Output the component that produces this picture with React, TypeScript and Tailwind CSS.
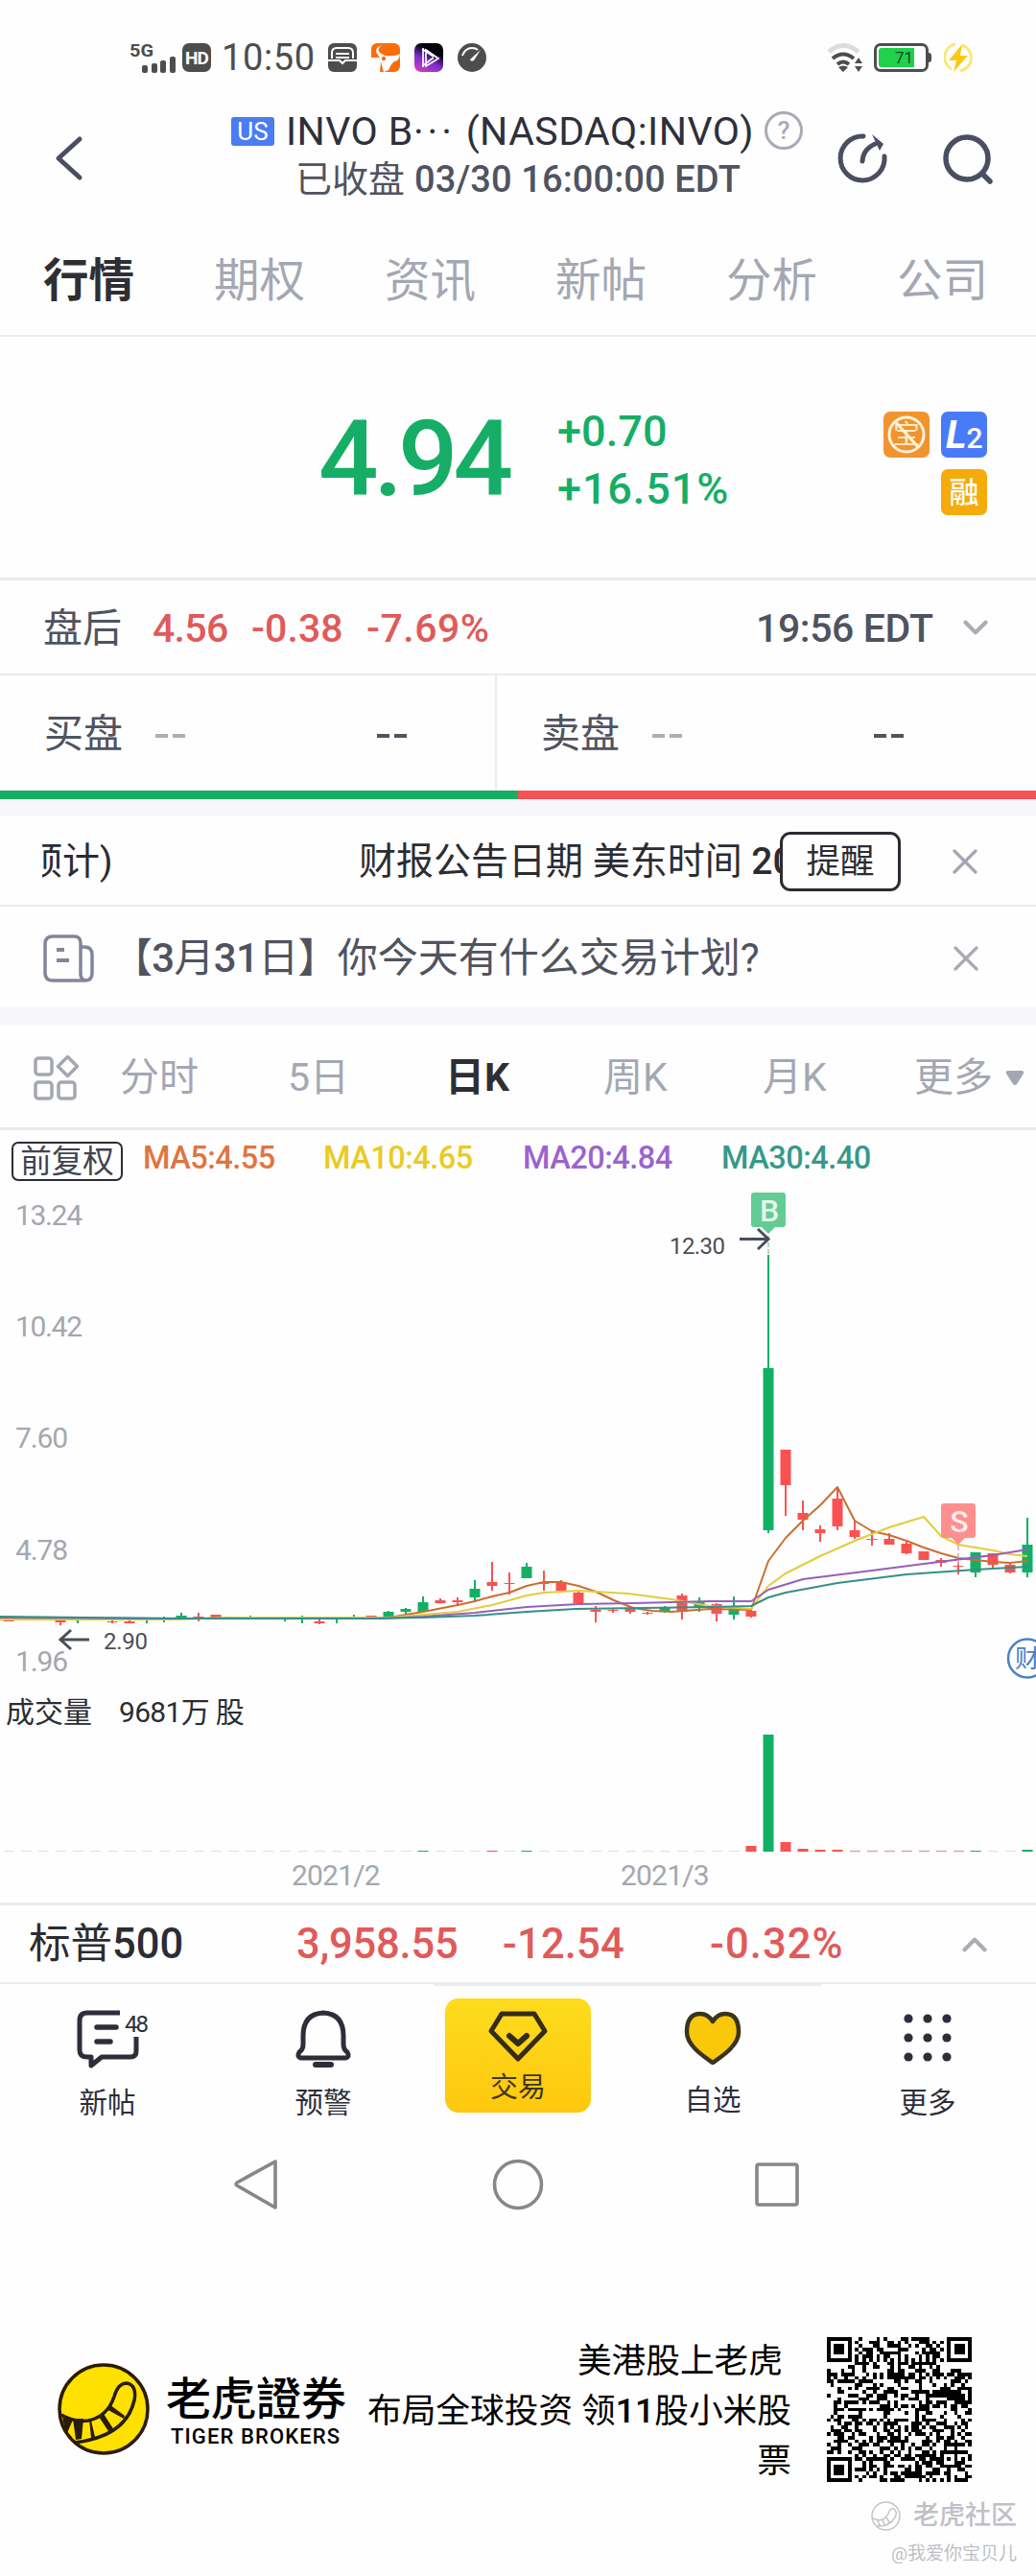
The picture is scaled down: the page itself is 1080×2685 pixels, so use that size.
import type { ReactNode } from "react";
import { ChevronDown, ChevronUp, X } from "lucide-react";

const GREEN = "#12b065";
const RED = "#fa5252";

// [center x, up, high, body top, body bottom, low]
type Candle = [number, boolean, number, number, number, number];

const candles: Candle[] = [
    [9, false, 1687, 1688, 1690, 1690],
    [63, false, 1688, 1689, 1691, 1694],
    [81, true, 1688, 1688, 1689, 1692],
    [117, false, 1689, 1690, 1691, 1692],
    [135, false, 1689, 1690, 1692, 1692],
    [153, true, 1687, 1688, 1689, 1692],
    [171, true, 1685, 1687, 1688, 1691],
    [189, true, 1681, 1684, 1686, 1688],
    [207, false, 1681, 1685, 1686, 1690],
    [225, false, 1683, 1683, 1686, 1686],
    [261, true, 1684, 1686, 1687, 1688],
    [297, true, 1685, 1687, 1688, 1690],
    [315, true, 1684, 1687, 1688, 1692],
    [333, false, 1688, 1690, 1692, 1693],
    [351, true, 1685, 1687, 1688, 1692],
    [369, true, 1683, 1685, 1687, 1687],
    [387, false, 1684, 1684, 1686, 1686],
    [405, true, 1679, 1680, 1685, 1685],
    [423, true, 1676, 1677, 1680, 1682],
    [441, true, 1664, 1670, 1680, 1680],
    [459, false, 1666, 1668, 1671, 1671],
    [477, false, 1665, 1668, 1670, 1674],
    [495, true, 1647, 1656, 1665, 1670],
    [513, false, 1628, 1649, 1653, 1658],
    [531, false, 1639, 1650, 1651, 1662],
    [549, true, 1629, 1633, 1645, 1645],
    [567, false, 1637, 1649, 1651, 1658],
    [585, false, 1647, 1649, 1658, 1658],
    [603, false, 1659, 1660, 1671, 1671],
    [621, false, 1674, 1678, 1680, 1691],
    [639, false, 1676, 1678, 1679, 1681],
    [657, false, 1675, 1676, 1680, 1682],
    [675, false, 1680, 1681, 1682, 1683],
    [693, true, 1674, 1676, 1680, 1681],
    [711, false, 1661, 1663, 1680, 1688],
    [729, true, 1665, 1670, 1676, 1680],
    [747, false, 1671, 1672, 1682, 1690],
    [765, true, 1664, 1676, 1683, 1688],
    [783, false, 1678, 1679, 1685, 1686],
    [801, true, 1308, 1426, 1595, 1598],
    [819, false, 1511, 1511, 1548, 1580],
    [837, false, 1564, 1577, 1584, 1595],
    [855, false, 1590, 1594, 1598, 1607],
    [873, false, 1551, 1562, 1591, 1595],
    [891, false, 1585, 1595, 1602, 1604],
    [909, false, 1596, 1604, 1605, 1611],
    [927, false, 1598, 1604, 1610, 1610],
    [945, false, 1607, 1609, 1619, 1620],
    [963, false, 1617, 1617, 1626, 1626],
    [981, false, 1624, 1626, 1629, 1633],
    [999, false, 1628, 1632, 1633, 1641],
    [1017, true, 1618, 1618, 1639, 1644],
    [1035, false, 1619, 1619, 1631, 1634],
    [1053, false, 1630, 1631, 1639, 1640],
    [1071, true, 1582, 1610, 1639, 1644],
];

const averages = [
    {
        color: "#cc6d33",
        points: "0,1687 160,1688 250,1686 380,1687 405,1686 441,1680 477,1673 495,1669 513,1664 531,1660 549,1653 567,1649 585,1649 603,1653 621,1659 640,1668 660,1676 680,1679 700,1680 740,1677 783,1678 801,1627 819,1603 837,1585 855,1569 873,1550 891,1585 909,1596 927,1600 945,1606 963,1613 981,1619 999,1624 1017,1626 1035,1628 1053,1629 1071,1627",
    },
    {
        color: "#e3cd3a",
        points: "0,1688 170,1688 250,1686 405,1686 441,1683 477,1680 513,1673 549,1663 567,1660 585,1659 603,1658 655,1661 700,1667 740,1674 783,1677 801,1653 819,1640 855,1622 891,1606 927,1592 963,1581 981,1601 999,1610 1035,1616 1053,1620 1071,1622",
    },
    {
        color: "#9560bd",
        points: "0,1686 160,1687 400,1687 441,1685 495,1681 549,1675 603,1672 660,1671 740,1669 783,1669 801,1657 837,1646 909,1637 963,1630 1035,1621 1053,1618 1071,1615",
    },
    {
        color: "#368f88",
        points: "0,1685 90,1686 200,1687 380,1687 441,1686 495,1684 549,1680 600,1677 740,1675 783,1674 801,1665 819,1660 873,1650 945,1641 1017,1636 1071,1633",
    },
];

const volumes = [
    { x: 783, h: 6, up: false },
    { x: 801, h: 122, up: true },
    { x: 819, h: 10, up: false },
    { x: 837, h: 3, up: false },
    { x: 855, h: 2, up: false },
    { x: 873, h: 2, up: false },
    { x: 1017, h: 1, up: true },
    { x: 1071, h: 2, up: true },
    { x: 513, h: 1, up: false },
    { x: 549, h: 1, up: true },
    { x: 441, h: 1, up: true },
];

const axisLabels = [
    { y: 1277, text: "13.24" },
    { y: 1393, text: "10.42" },
    { y: 1509, text: "7.60" },
    { y: 1626, text: "4.78" },
    { y: 1742, text: "1.96" },
];

function StatusBar() {
    return (
        <div className="flex h-[110px] items-center pt-[10px] pl-[135px] text-[#4d4d4d]">
            <svg width="50" height="34" viewBox="0 0 50 34" fill="currentColor">
                <text x="0" y="16" fontSize="19" fontWeight="700" textLength="25" lengthAdjust="spacingAndGlyphs">5G</text>
                <rect x="13" y="25" width="6" height="8" rx="2" />
                <rect x="23" y="23" width="6" height="10" rx="2" />
                <rect x="32" y="20" width="6" height="13" rx="2" />
                <rect x="42" y="16" width="6" height="17" rx="2" />
            </svg>
            <div className="ml-[5px] flex size-[30px] items-center justify-center rounded-[7px] bg-[#4d4d4d] text-[19px] leading-none font-bold tracking-[-1px] text-white">HD</div>
            <span className="ml-[11px] w-[111px] text-[38px] leading-none tracking-[0.6px]">10:50</span>
            <svg width="30" height="30" viewBox="0 0 30 30">
                <rect width="30" height="30" rx="6" fill="#4d4d4d" />
                <path d="M4 16V10q0-5 5-5h12q5 0 5 5v6" fill="none" stroke="#fff" strokeWidth="2" />
                <path d="M8 11h14M8 15h14" stroke="#fff" strokeWidth="2" />
                <path d="M0 18h12l3 3 3-3h12" fill="none" stroke="#fff" strokeWidth="2" />
            </svg>
            <svg width="30" height="30" viewBox="0 0 30 30" className="ml-[15px]">
                <rect width="30" height="30" rx="6" fill="#fb6d0c" />
                <path d="M0 15h8l2 4-1 11H6q-6 0-6-6zM12 2Q5 5 9 10l5 3q9 1 14-1l2-1q-1 8-6 8l-3 3-3 6-5 2-2-7-2-7-2-4Q3 8 7 4z" fill="#fff" />
                <circle cx="13" cy="16" r="2.200" fill="#fb6d0c" />
            </svg>
            <svg width="30" height="30" viewBox="0 0 30 30" className="ml-[15px]">
                <defs>
                    <linearGradient id="player" x1="0.7" y1="0" x2="0.2" y2="1">
                        <stop offset="0.25" stopColor="#06030c" />
                        <stop offset="0.6" stopColor="#7c2fd0" />
                        <stop offset="1" stopColor="#d238c0" />
                    </linearGradient>
                </defs>
                <rect width="30" height="30" rx="7" fill="url(#player)" />
                <path d="M9 5v20M12 7l13 9-13 8zM8 6l12 8M8 24l12-9" fill="none" stroke="#fff" strokeWidth="1.7" />
            </svg>
            <svg width="30" height="30" viewBox="0 0 30 30" className="ml-[15px]">
                <circle cx="15" cy="15" r="15" fill="#4d4d4d" />
                <path d="M5 13Q8 5 15 5q4 0 6 2" fill="none" stroke="#fff" strokeWidth="2" />
                <path d="M24 7 17 18q-3 2-4-1z" fill="#fff" />
            </svg>
            <svg width="38" height="32" viewBox="0 0 38 32" className="ml-[355px]" fill="none" strokeWidth="5">
                <path d="M2 10Q17-3 33 10" stroke="#dcdcdc" />
                <path d="M6 17q11-9 22 0M11 23q6-5 12 0" stroke="#4d4d4d" strokeWidth="4" />
                <path d="m12 26 5 5 5-5q-5-3-10 0zM29 22l4-6 4 6zM29 25h8l-4 6z" fill="#4d4d4d" />
            </svg>
            <div className="ml-[11px] flex h-[30px] w-[57px] rounded-[7px] border-[3px] border-[#4d4d4d] p-[2px]">
                <div className="flex w-[37px] items-center justify-end rounded-l-[3px] bg-[#1ed24b] pr-px text-[17px] leading-none text-[#24422b]">71</div>
            </div>
            <div className="h-[10px] w-[3px] rounded-r bg-[#4d4d4d]" />
            <svg width="30" height="32" viewBox="0 0 30 32" className="ml-[13px]">
                <path d="M12 2A14 14 0 0 0 8 28M19 3a14 14 0 0 1-2 27" fill="none" stroke="#fbe77a" strokeWidth="3" />
                <path d="M19 2 5 19h8l-3 12 15-17h-8z" fill="#fbc914" />
            </svg>
        </div>
    );
}

function Header() {
    return (
        <div className="flex h-[126px] items-start">
            <svg width="32" height="50" viewBox="0 0 32 50" className="mt-[30px] ml-[56px]" fill="none" stroke="#4b4e60" strokeWidth="5" strokeLinecap="round" strokeLinejoin="round">
                <path d="M27 5 5 25l22 20" />
            </svg>
            <div className="ml-[153px] w-[600px]">
                <div className="flex h-[54px] items-center">
                    <span className="flex h-[30px] w-[45px] items-center justify-center rounded-[3px] bg-[#4a7cf3] text-[26px] leading-none text-white">US</span>
                    <span className="ml-[12px] w-[482px] text-[41px] leading-none tracking-[0.45px] whitespace-nowrap text-[#2e303c]">
                        INVO B<span className="tracking-[4px]">···</span> (NASDAQ:INVO)
                    </span>
                    <span className="mb-[3px] ml-[17px] flex size-[40px] shrink-0 items-center justify-center rounded-full border-[3px] border-[#a9abb5] text-[26px] leading-none font-medium text-[#a9abb5]">?</span>
                </div>
                <div className="ml-[67px] flex h-[46px] items-center text-[38px] leading-none font-medium whitespace-nowrap text-[#505361]">
                    <span className="w-[124px] font-normal">已收盘</span>
                    <span className="tracking-[0.1px]">03/30 16:00:00 EDT</span>
                </div>
            </div>
            <svg width="54" height="54" viewBox="0 0 54 54" className="mt-[28px] ml-[32px]" fill="none" stroke="#4b4e60" strokeWidth="5" strokeLinecap="round">
                <path d="M27 4A23 23 0 1 0 49 25" />
                <path d="M26 30q1-14 16-19" />
                <path d="M36 2l12 10-4 7z" fill="#4b4e60" stroke="none" />
            </svg>
            <svg width="56" height="56" viewBox="0 0 56 56" className="mt-[28px] ml-[55px]" fill="none" stroke="#4b4e60" strokeWidth="5.500" strokeLinecap="round">
                <circle cx="26" cy="27" r="22" />
                <path d="m42 43 8 8" />
            </svg>
        </div>
    );
}

function MainTabs() {
    return (
        <div className="flex h-[115px] items-center justify-between border-b-2 border-[#ececee] pt-[2px] pr-[50px] pl-[45px] text-[47.500px] leading-none text-[#a4a7b3]">
            <span className="font-bold text-[#2f2f33]">行情</span>
            <span>期权</span>
            <span>资讯</span>
            <span>新帖</span>
            <span>分析</span>
            <span>公司</span>
        </div>
    );
}

function PriceBlock() {
    return (
        <div className="flex h-[254px] border-b-[3px] border-[#ebebed] text-[#16ae66]">
            <div className="mt-[73px] ml-[332px] w-[249px] text-[110px] leading-none font-medium tracking-[-5px]">4.94</div>
            <div className="mt-[69px] w-[327px] text-[45px] leading-[60px] font-medium">
                <div className="tracking-[0.1px]">+0.70</div>
                <div className="tracking-[0.9px]">+16.51%</div>
            </div>
            <div className="mt-[78px] ml-[13px] flex w-[108px] flex-wrap content-start justify-end gap-[12px] text-white">
                <svg width="48" height="48" viewBox="0 0 48 48">
                    <rect width="48" height="48" rx="7" fill="#f19430" />
                    <text x="10" y="34" fontSize="28" fill="#ffe9c4">宝</text>
                    <circle cx="24" cy="24" r="18" fill="none" stroke="#fff3da" strokeWidth="3" />
                    <path d="m12 10 24 27" stroke="#fff3da" strokeWidth="3" />
                </svg>
                <div className="flex size-[48px] items-baseline rounded-[7px] bg-[#4a7bf7] pt-[4px] pl-[5px] leading-none font-bold">
                    <span className="text-[41px] leading-none italic">L</span>
                    <span className="text-[30px] leading-none font-medium">2</span>
                </div>
                <div className="flex size-[48px] items-center justify-center rounded-[7px] bg-[#f5ab0a] text-[31px] leading-none font-medium">融</div>
            </div>
        </div>
    );
}

function AfterHours() {
    return (
        <div className="flex h-[99px] items-center border-b-2 border-[#ebebed] pt-[3px] pl-[45px] text-[41px] leading-none font-medium whitespace-nowrap text-[#e05a5a]">
            <span className="w-[114px] font-normal text-[#50535f]">盘后</span>
            <span className="w-[103px] tracking-[-0.7px]">4.56</span>
            <span className="w-[120px] tracking-[0.1px]">-0.38</span>
            <span className="w-[406px] tracking-[0.5px]">-7.69%</span>
            <span className="w-[208px] tracking-[-0.4px] text-[#50535f]">19:56 EDT</span>
            <ChevronDown size={42} strokeWidth={2.4} color="#abadb6" className="-mt-[3px]" />
        </div>
    );
}

function Quote({ label }: { label: string }) {
    return (
        <div className="flex flex-1 items-center pt-[3px] pl-[46px] text-[41px] leading-none text-[#50535f]">
            <span className="w-[116px]">{label}</span>
            <span className="flex w-[231px] gap-[5px] pt-[2px]">
                <i className="h-[4px] w-[13px] bg-[#adafb6]" />
                <i className="h-[4px] w-[13px] bg-[#adafb6]" />
            </span>
            <span className="flex gap-[5px] pt-[2px]">
                <i className="h-[4px] w-[13px] bg-[#50535f]" />
                <i className="h-[4px] w-[13px] bg-[#50535f]" />
            </span>
        </div>
    );
}

function Notices() {
    return (
        <>
            <div className="flex h-[94px] items-center border-b-2 border-[#ebebed] pt-px pl-[44px] text-[39px] leading-none text-[#2b2c33]">
                <div className="flex w-[769px] overflow-hidden pt-[2px] whitespace-nowrap">
                    <span className="-ml-[18px] w-[348px] shrink-0 py-1">预计)</span>
                    <span className="shrink-0 py-1">财报公告日期 美东时间 <b className="font-medium">20</b></span>
                </div>
                <div className="flex h-[62px] w-[126px] shrink-0 items-center justify-center rounded-[11px] border-[3px] border-[#2b2c33] pt-[2px] text-[35.500px]">提醒</div>
                <X size={44} strokeWidth={1.8} color="#a4a7b3" className="ml-[45px]" />
            </div>
            <div className="flex h-[105px] items-center pt-[2px] pl-[45px]">
                <svg width="54" height="50" viewBox="0 0 54 50" fill="none" stroke="#83869a" strokeWidth="3.500">
                    <path d="M10 2h22q7 0 7 7v32q0 7 7 7H10q-8 0-8-8V10q0-8 8-8zM39 13h4q8 0 8 8v19q0 8-7 8" />
                    <path d="M14 16h8M14 27h13" strokeWidth="4" />
                </svg>
                <span className="ml-[18px] w-[868px] text-[42px] leading-none whitespace-nowrap text-[#50535f]">
                    <span className="tracking-[-0.7px]">【<b className="font-medium">3</b>月<b className="font-medium">31</b>日】</span>你今天有什么交易计划?
                </span>
                <X size={44} strokeWidth={1.8} color="#a9abb3" />
            </div>
        </>
    );
}

function ChartTabs() {
    return (
        <div className="flex h-[110px] items-center border-b-[3px] border-[#ebebed] pt-[4px] pl-[35px] text-[41px] leading-none whitespace-nowrap text-[#a4a7b3]">
            <svg width="48" height="48" viewBox="0 0 48 48" fill="none" stroke="#a4a7b3" strokeWidth="3.500">
                <rect x="2" y="3" width="17" height="17" rx="3" />
                <path d="m35.500 1.500 10 10-10 10-10-10z" strokeLinejoin="round" />
                <rect x="2" y="28" width="17" height="17" rx="3" />
                <rect x="26" y="28" width="17" height="17" rx="3" />
            </svg>
            <span className="ml-[42px] w-[175px]">分时</span>
            <span className="w-[164px]">5日</span>
            <span className="w-[165px] font-bold text-[#2f2f33]">日K</span>
            <span className="w-[166px]">周K</span>
            <span className="w-[158px]">月K</span>
            <span>更多</span>
            <svg width="20" height="16" viewBox="0 0 20 16" className="ml-[13px]">
                <path d="M2 0h16q2 1 1 3l-7 11q-2 2-4 0L1 3Q0 1 2 0z" fill="#a4a7b3" />
            </svg>
        </div>
    );
}

function Averages() {
    return (
        <div className="flex h-[59px] items-end pl-[12px] text-[32.500px] leading-none font-medium whitespace-nowrap">
            <span className="mb-[6px] flex h-[41px] w-[116px] items-center justify-center rounded-[7px] border-[2.500px] border-[#2b2c33] pt-[2px] font-normal text-[#40434f]">前复权</span>
            <div className="mb-[14px] ml-[21px] flex tracking-[-0.5px]">
                <span className="w-[188px] text-[#e17442]">MA5:4.55</span>
                <span className="w-[208px] text-[#e9cb25]">MA10:4.65</span>
                <span className="w-[207px] text-[#9c63ce]">MA20:4.84</span>
                <span className="text-[#35998a]">MA30:4.40</span>
            </div>
        </div>
    );
}

function Marker({ x, y, color, letter }: { x: number; y: number; color: string; letter: string }) {
    return (
        <g>
            <path d={`M${x - 15} ${y}h30q3 0 3 3v30q0 3-3 3h-8l-7 7-7-7h-8q-3 0-3-3v-30q0-3 3-3z`} fill={color} />
            <text x={x + 1} y={y + 30} fontSize="32" fontWeight="500" fill="#fff" fillOpacity="0.85" textAnchor="middle">{letter}</text>
        </g>
    );
}

function CandleChart() {
    return (
        <svg width="1080" height="528" viewBox="0 1237 1080 528" className="block">
            {axisLabels.map((label) => (
                <text key={label.text} x="16" y={label.y} fontSize="30" fill="#a4a7b0" textLength={label.text.length > 4 ? 70 : 55}>{label.text}</text>
            ))}
            {candles.map(([x, up, high, top, bottom, low]) => (
                <g key={x} fill={up ? GREEN : RED}>
                    <rect x={x - 1} y={high} width="2" height={low - high} />
                    <rect x={x - 5.5} y={top} width="11" height={bottom - top} />
                </g>
            ))}
            {averages.map((line) => (
                <polyline key={line.color} points={line.points} fill="none" stroke={line.color} strokeWidth="2" strokeLinejoin="round" />
            ))}
            <path d="M801 1288v20" stroke="#9ec9b4" strokeWidth="1.500" strokeDasharray="5 2" />
            <path d="M999 1611v20" stroke="#dba0b4" strokeWidth="1.500" strokeDasharray="5 3" />
            <Marker x={801} y={1243} color="#62cc94" letter="B" />
            <Marker x={999} y={1567} color="#fd8f8f" letter="S" />
            <g fill="none" stroke="#4b4e5a" strokeWidth="3">
                <path d="M771 1291.500h29M790 1281l11 10.500-11 10.500" />
                <path d="M93 1709H63M74 1699l-11 10 11 10" />
            </g>
            <g fontSize="24" fill="#4b4e5a">
                <text x="698" y="1307" textLength="58">12.30</text>
                <text x="108" y="1719" textLength="46">2.90</text>
            </g>
            <circle cx="1071" cy="1728.500" r="20" fill="#fff" stroke="#4d80c4" strokeWidth="2.500" />
            <text x="1058" y="1738" fontSize="26" fill="#4d80c4">财</text>
        </svg>
    );
}

function Volume() {
    return (
        <div className="h-[221px] border-b-[3px] border-[#ebebed]">
            <div className="flex h-[40px] items-center pl-[6px] text-[30px] leading-none whitespace-nowrap text-[#2b2c33]">
                <span className="w-[118px]">成交量</span>
                <span className="tracking-[-0.7px]">9681万 股</span>
            </div>
            <svg width="1080" height="128" viewBox="0 1805 1080 128" className="block">
                <path d="M4 1929.500H1080" stroke="#dfe0e3" strokeWidth="1" strokeDasharray="11 7" />
                <path d="M886 1929.500h120" stroke="#dca6a8" strokeWidth="1.500" strokeDasharray="11 7" />
                {volumes.map((bar) => (
                    <rect key={bar.x} x={bar.x - 5.5} y={1930 - bar.h} width="11" height={bar.h} fill={bar.up ? GREEN : RED} />
                ))}
            </svg>
            <div className="flex h-[43px] items-center pl-[304px] text-[30px] leading-none text-[#a4a7b0]">
                <span className="w-[343px] tracking-[-0.8px]">2021/2</span>
                <span className="tracking-[-0.8px]">2021/3</span>
            </div>
        </div>
    );
}

function IndexRow() {
    return (
        <div className="flex h-[82px] items-center border-b-2 border-[#ebebed] pt-[2px] pl-[30px] text-[43.500px] leading-none font-medium whitespace-nowrap text-[#e05a5a]">
            <span className="w-[279px] text-[#2b2c33]"><span className="font-normal">标普</span>500</span>
            <span className="w-[215px] tracking-[-0.2px]">3,958.55</span>
            <span className="w-[216px] tracking-[0.2px]">-12.54</span>
            <span className="w-[255px] tracking-[1.1px]">-0.32%</span>
            <ChevronUp size={42} strokeWidth={2.4} color="#abadb6" />
        </div>
    );
}

function NavItem({ label, className, children }: { label: string; className: string; children: ReactNode }) {
    return (
        <div className={`flex w-[66px] flex-col items-center text-[29.500px] leading-none whitespace-nowrap text-[#2d2e3a] ${className}`}>
            <div className="flex h-[64px] items-center">{children}</div>
            <span>{label}</span>
        </div>
    );
}

function BottomNav() {
    return (
        <div className="h-[147px]">
            <div className="ml-[452px] h-[2px] w-[404px] bg-[#ececf2]" />
            <div className="flex">
                <NavItem label="新帖" className="mt-[22px] ml-[79px] gap-[22px]">
                    <svg width="78" height="64" viewBox="0 0 78 64" className="-mr-[12px]" fill="none" stroke="#2d2e3a" strokeWidth="5">
                        <path d="M46 6H12q-8 0-8 8v31q0 7 8 7h4v9l11-9h30q6 0 6-6V31" strokeLinejoin="round" />
                        <path d="M22 21h20M22 36h14" strokeWidth="5.500" strokeLinecap="round" />
                        <text x="51" y="26" fontSize="24" fill="#2d2e3a" stroke="none" textLength="25">48</text>
                    </svg>
                </NavItem>
                <NavItem label="预警" className="mt-[22px] ml-[159px] gap-[22px]">
                    <svg width="64" height="64" viewBox="0 0 64 64" fill="none" stroke="#2d2e3a" strokeWidth="5" strokeLinejoin="round">
                        <path d="M32 6Q11 7 11 30v9q0 5-4 8-3 5 2 6h46q5-1 2-6-4-3-4-8v-9Q53 7 32 6z" />
                        <path d="M24 60h16" strokeLinecap="round" strokeWidth="6" />
                    </svg>
                </NavItem>
                <div className="mt-[13px] ml-[94px] flex h-[119px] w-[152px] flex-col items-center rounded-[14px] bg-gradient-to-b from-[#fddb1d] to-[#fec80d] pt-[10px] text-[29px] leading-none text-[#40361a]">
                    <svg width="62" height="60" viewBox="0 0 62 60" fill="none" stroke="#352c18" strokeWidth="5" strokeLinejoin="round">
                        <path d="M14 6h34l11 18-28 29L3 24z" />
                        <path d="m22 29 9 8 9-8" strokeWidth="6" strokeLinecap="round" />
                    </svg>
                    <span className="mt-[9px]">交易</span>
                </div>
                <NavItem label="自选" className="mt-[22px] ml-[94px] gap-[19px]">
                    <svg width="62" height="60" viewBox="0 0 62 60" className="-mt-px" fill="#f9c909" stroke="#3a341f" strokeWidth="4.500" strokeLinejoin="round">
                        <path d="M31 13Q26 5 18 5 4 5 4 24c0 14 17 25 27 32 10-7 27-18 27-32Q58 5 44 5q-8 0-13 8z" />
                    </svg>
                </NavItem>
                <NavItem label="更多" className="mt-[22px] ml-[158px] gap-[22px]">
                    <svg width="50" height="50" viewBox="0 0 50 50" fill="#2d2e3a">
                        {[5, 25, 45].map((y) => [5, 25, 45].map((x) => <circle key={`${x}-${y}`} cx={x} cy={y} r="4.600" />))}
                    </svg>
                </NavItem>
            </div>
        </div>
    );
}

function SystemNav() {
    return (
        <div className="flex h-[184px] items-start pt-[34px] pl-[242px]">
            <svg width="600" height="56" viewBox="0 0 600 56" fill="none" stroke="#878787" strokeWidth="3.600" strokeLinejoin="round">
                <path d="M45 4v48L5 29q-2-1 0-3z" />
                <circle cx="298" cy="28" r="24.500" />
                <rect x="547" y="7" width="42" height="42" rx="2" />
            </svg>
        </div>
    );
}

const QR_SIZE = 41;

// finders, alignment mark, timing lines, then the data area
function buildQr() {
    let seed = 20210331;
    let d = "";
    const ring = (dx: number, dy: number, r: number) => {
        const m = Math.max(Math.abs(dx), Math.abs(dy));
        return r === 3 ? m !== 2 : m !== 1;
    };
    for (let y = 0; y < QR_SIZE; y++) {
        for (let x = 0; x < QR_SIZE; x++) {
            seed = (seed * 1103515245 + 12345) % 2147483648;
            let dark = (seed >> 13) % 100 < 51;
            const left = x < 8;
            const top = y < 8;
            const right = x >= QR_SIZE - 8;
            const bottom = y >= QR_SIZE - 8;
            if ((left && top) || (right && top) || (left && bottom)) {
                const dx = x - (left ? 3 : QR_SIZE - 4);
                const dy = y - (top ? 3 : QR_SIZE - 4);
                dark = Math.max(Math.abs(dx), Math.abs(dy)) <= 3 && ring(dx, dy, 3);
            } else if (x === 6 || y === 6) {
                dark = (x + y) % 2 === 0;
            } else if (Math.abs(x - 34) <= 2 && Math.abs(y - 34) <= 2) {
                dark = ring(x - 34, y - 34, 2);
            }
            if (dark) d += `M${x} ${y}h1v1h-1z`;
        }
    }
    return d;
}

const qrPath = buildQr();

function TigerTail() {
    return (
        <>
            <path d="M4 54q13 8 28 6 20-4 27-25 4-14 13-14 11 2 8 18Q71 77 17 83" fill="none" stroke="#2a1c06" strokeWidth="3.500" />
            <path d="M5 54l11 5-6 14Q6 66 5 54zM16 58h11l-2 21-6 1zM33 59l2 1 4 17-4 1zM43 56l5-3 11 17-4 4zM51 48l3-5 16 12-1 3z" fill="#2a1c06" />
        </>
    );
}

function Footer() {
    return (
        <div className="h-[285px] pt-[33px] leading-none text-black">
            <div className="flex h-[154px] items-start">
                <svg width="96" height="96" viewBox="0 0 96 96" className="mt-[31px] ml-[60px]">
                    <circle cx="48" cy="48" r="46" fill="#ffe100" stroke="#2a1c06" strokeWidth="3.500" />
                    <TigerTail />
                </svg>
                <div className="mt-[41px] ml-[17px] w-[188px]">
                    <div className="text-[47px] leading-none font-medium whitespace-nowrap font-['Noto_Sans_CJK_TC',sans-serif]">老虎證券</div>
                    <div className="mt-[9px] ml-[5px] text-[22px] leading-none font-medium tracking-[1.1px] whitespace-nowrap">TIGER BROKERS</div>
                </div>
                <div className="mt-[3px] w-[464px] text-right text-[35.700px] leading-[52px]">
                    <div className="pr-[9px]">美港股上老虎</div>
                    <div className="whitespace-nowrap">布局全球投资 领<b className="font-medium">11</b>股小米股</div>
                    <div>票</div>
                </div>
                <svg width="151" height="151" viewBox="0 0 41 41" className="mt-[4px] ml-[37px]" shapeRendering="crispEdges">
                    <path d={qrPath} fill="#000" />
                </svg>
            </div>
            <div className="flex flex-col items-end pt-[21px] pr-[20px] text-[#bfc0c6]">
                <div className="flex items-center gap-[13px] text-[27px] leading-none font-medium">
                    <svg width="31" height="31" viewBox="0 0 31 31" fill="none" stroke="#c3c4ca" strokeWidth="1.500">
                        <circle cx="15.500" cy="15.500" r="14.500" />
                        <path d="M2 18q11 5 16-5 2-6 6-5 4 3 1 9-6 10-19 9M7 20l2 6M12 19l2 6M16 17l3 5" />
                    </svg>
                    <span>老虎社区</span>
                </div>
                <div className="mt-[14px] text-[19px] leading-none">@我爱你宝贝儿</div>
            </div>
        </div>
    );
}

export default function App() {
    return (
        <div className="h-[2685px] w-[1080px] overflow-hidden bg-[#fefefe] font-['Roboto','Noto_Sans_CJK_SC',sans-serif]">
            <StatusBar />
            <Header />
            <MainTabs />
            <PriceBlock />
            <AfterHours />
            <div className="flex h-[120px]">
                <div className="flex w-[518px] border-r-2 border-[#ececee]">
                    <Quote label="买盘" />
                </div>
                <Quote label="卖盘" />
            </div>
            <div className="flex h-[9px]">
                <div className="w-1/2 bg-[#16ae66]" />
                <div className="w-1/2 bg-[#f65257]" />
            </div>
            <div className="h-[18px] bg-[#f7f7f9]" />
            <Notices />
            <div className="h-[18px] bg-[#f6f6f9]" />
            <ChartTabs />
            <Averages />
            <CandleChart />
            <Volume />
            <IndexRow />
            <BottomNav />
            <SystemNav />
            <Footer />
        </div>
    );
}
